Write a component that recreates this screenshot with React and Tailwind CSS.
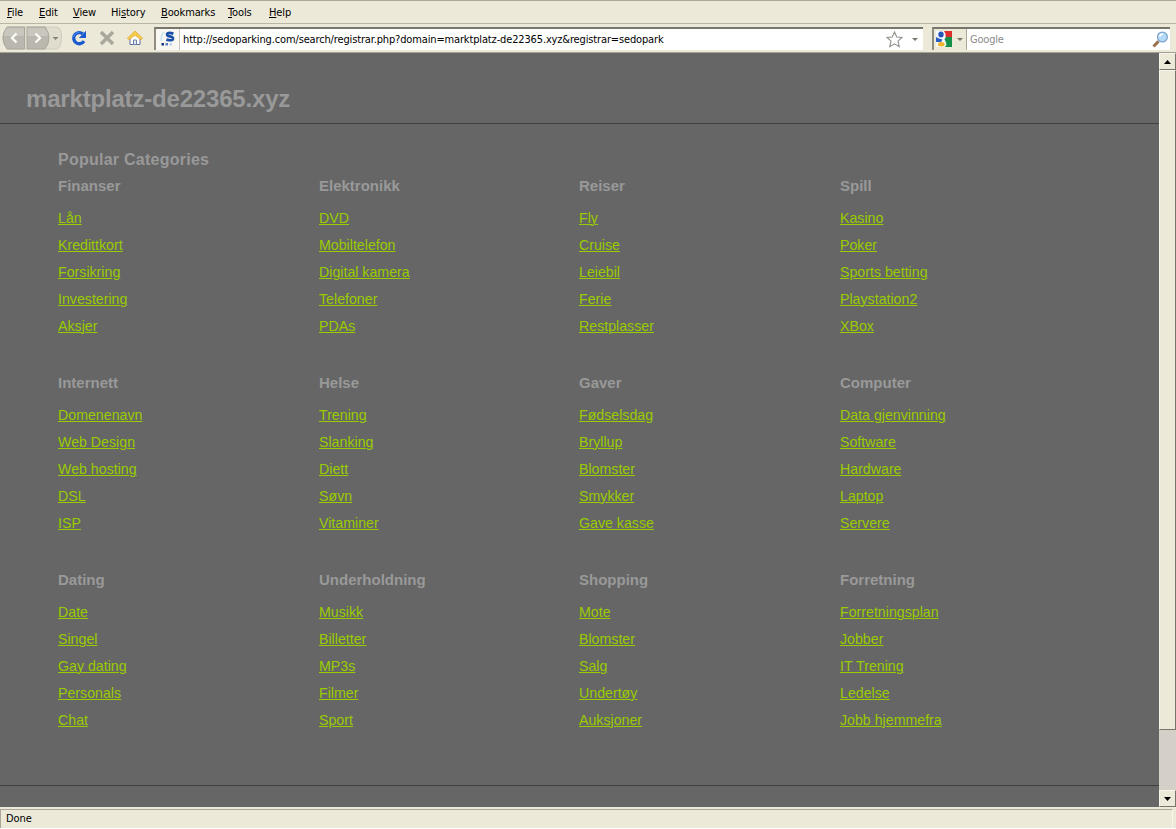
import clsx from 'clsx';

const menuItems = [
  { label: 'File', before: '', key: 'F', after: 'ile', width: 'w-[32px]' },
  { label: 'Edit', before: '', key: 'E', after: 'dit', width: 'w-[34px]' },
  { label: 'View', before: '', key: 'V', after: 'iew', width: 'w-[38px]' },
  { label: 'History', before: 'Hi', key: 's', after: 'tory', width: 'w-[50px]' },
  { label: 'Bookmarks', before: '', key: 'B', after: 'ookmarks', width: 'w-[67px]' },
  { label: 'Tools', before: '', key: 'T', after: 'ools', width: 'w-[41px]' },
  { label: 'Help', before: '', key: 'H', after: 'elp', width: 'w-[40px]' },
];

const categories = [
  { title: 'Finanser', links: ['Lån', 'Kredittkort', 'Forsikring', 'Investering', 'Aksjer'] },
  { title: 'Elektronikk', links: ['DVD', 'Mobiltelefon', 'Digital kamera', 'Telefoner', 'PDAs'] },
  { title: 'Reiser', links: ['Fly', 'Cruise', 'Leiebil', 'Ferie', 'Restplasser'] },
  { title: 'Spill', links: ['Kasino', 'Poker', 'Sports betting', 'Playstation2', 'XBox'] },
  { title: 'Internett', links: ['Domenenavn', 'Web Design', 'Web hosting', 'DSL', 'ISP'] },
  { title: 'Helse', links: ['Trening', 'Slanking', 'Diett', 'Søvn', 'Vitaminer'] },
  { title: 'Gaver', links: ['Fødselsdag', 'Bryllup', 'Blomster', 'Smykker', 'Gave kasse'] },
  { title: 'Computer', links: ['Data gjenvinning', 'Software', 'Hardware', 'Laptop', 'Servere'] },
  { title: 'Dating', links: ['Date', 'Singel', 'Gay dating', 'Personals', 'Chat'] },
  { title: 'Underholdning', links: ['Musikk', 'Billetter', 'MP3s', 'Filmer', 'Sport'] },
  { title: 'Shopping', links: ['Mote', 'Blomster', 'Salg', 'Undertøy', 'Auksjoner'] },
  { title: 'Forretning', links: ['Forretningsplan', 'Jobber', 'IT Trening', 'Ledelse', 'Jobb hjemmefra'] },
];

const NavButtons = () => (
  <svg width="60" height="24" viewBox="0 0 60 24" className="shrink-0">
    <path d="M7 1H55Q60 2 59.5 12T55 23H7Q1 19 1 12T7 1Z" fill="#e0ddce" stroke="#cfccbe" />
    <path d="M5 1H22.5V23H5Q1 18 1 12T5 1Z" fill="#bab8ae" stroke="#aaa89d" />
    <path d="M25 1H43Q47 6 47 12T43 23H25Z" fill="#bab8ae" stroke="#aaa89d" />
    <path d="M5.5 2H22V10H2Q2.5 4 5.5 2ZM25.5 2H42.5Q45.5 5 46 10H25.5Z" fill="#c9c7bd" />
    <path d="M14.5 7.5L10 12L14.5 16.5M33.5 7.5L38 12L33.5 16.5" fill="none" stroke="#fbfaf5" strokeWidth="2.4" />
    <path d="M50.5 11H56.5L53.5 14Z" fill="#85837a" />
  </svg>
);

const ReloadIcon = () => (
  <svg width="16" height="16" viewBox="0 0 16 16" className="shrink-0">
    <path d="M13 11.2A5.6 5.6 0 1 1 11.8 3.8" fill="none" stroke="#1c5ad0" strokeWidth="3.3" />
    <path d="M15 0.8V8H7.8Z" fill="#1c5ad0" />
    <path d="M2.5 7Q4 2.5 8.5 2.2" fill="none" stroke="#4f91ee" strokeWidth="1" />
  </svg>
);

const StopIcon = () => (
  <svg width="16" height="16" viewBox="0 0 16 16" className="shrink-0">
    <path d="M2 2L14 14M14 2L2 14" stroke="#aaa89c" strokeWidth="3.6" />
  </svg>
);

const HomeIcon = () => (
  <svg width="16" height="16" viewBox="0 0 16 16" className="shrink-0">
    <path d="M3 7V14.5H13V7L8 3Z" fill="#fffef8" stroke="#5e6f9e" />
    <path d="M6.5 14.5V10H9.5V14.5Z" fill="#dfe8f6" stroke="#6f7ea6" />
    <path d="M8 1L15.6 8.2L14 9.8L8 5.2L2 9.8L0.4 8.2Z" fill="#f6cb4a" stroke="#dba62c" strokeWidth="0.7" />
  </svg>
);

const SedoIcon = () => (
  <svg width="16" height="16" viewBox="0 0 16 16" className="shrink-0">
    <path d="M4 1Q0.5 4 1.5 10" fill="none" stroke="#c7e5f3" strokeWidth="1.6" />
    <path d="M13.4 2.6Q7 0.9 7.1 3.6Q7.2 5 10 5.4Q13.3 5.8 13 7.8Q12.4 10.2 6.4 8.6" fill="none" stroke="#1a4fa8" strokeWidth="2.7" />
    <path d="M1.5 12H4V14.5H1.5Z" fill="#17377e" />
    <path d="M5.5 12H8V14.5H5.5Z" fill="#5c80c2" />
    <path d="M9.5 12H12V14.5H9.5Z" fill="#b9d2ec" />
  </svg>
);

const StarIcon = () => (
  <svg width="17" height="17" viewBox="0 0 17 17" className="shrink-0">
    <path d="M8.5 1L10.7 6L16 6.5L12 10.2L13.2 15.6L8.5 12.8L3.8 15.6L5 10.2L1 6.5L6.3 6Z" fill="#fff" stroke="#8f8f8a" strokeWidth="1.1" />
  </svg>
);

const GoogleIcon = () => (
  <svg width="16" height="16" viewBox="0 0 16 16" className="shrink-0">
    <path d="M0 0H16V16H0Z" fill="#f6f8ff" />
    <path d="M8 0H16V6H9.5Q10.5 3 8 0Z" fill="#dc2f2c" />
    <path d="M10 6H16V16H9Q11.5 13.5 9.5 10.5L8.5 8Z" fill="#14904a" />
    <path d="M0 6Q4 8 6.5 8.5L5 11H0Z" fill="#2a5dc2" />
    <ellipse cx="5" cy="3.6" rx="2.7" ry="3" fill="#2456b9" />
    <ellipse cx="5.3" cy="13.3" rx="3.4" ry="2.2" fill="#f2b52d" />
  </svg>
);

const SearchIcon = () => (
  <svg width="17" height="17" viewBox="0 0 17 17" className="shrink-0">
    <path d="M1.5 15.5L6.5 10.3" stroke="#98704c" strokeWidth="3" />
    <circle cx="10.4" cy="6" r="4.9" fill="#b4dcf8" stroke="#7fa3cc" strokeWidth="1.3" />
    <path d="M7.5 5.8Q8.2 3 11 3" fill="none" stroke="#fff" strokeWidth="1.5" />
  </svg>
);

const Caret = ({ className, up }) => (
  <svg width="7" height="4" viewBox="0 0 7 4" className={clsx('shrink-0', className)}>
    <path d={up ? 'M0 4H7L3.5 0Z' : 'M0 0H7L3.5 4Z'} fill="currentColor" />
  </svg>
);

const SmallCaret = ({ className }) => (
  <svg width="6" height="3" viewBox="0 0 6 3" className={clsx('shrink-0 text-[#77756c]', className)}>
    <path d="M0 0H6L3 3Z" fill="currentColor" />
  </svg>
);

const ScrollButton = ({ up }) => (
  <div className="flex h-[17px] w-[17px] shrink-0 items-center justify-center border border-t-[#f7f5ec] border-r-[#77756c] border-b-[#77756c] border-l-[#f7f5ec] bg-[#ece9d8]">
    <Caret up={up} className="text-black" />
  </div>
);

const MenuBar = () => (
  <div className="flex h-[23px] shrink-0 items-center border-t border-[#aca899] pt-px pl-[7px] tracking-[-0.12px]">
    {menuItems.map((item) => (
      <span key={item.label} className={clsx('shrink-0 whitespace-nowrap', item.width)}>
        {item.before}
        <span className="underline underline-offset-1">{item.key}</span>
        {item.after}
      </span>
    ))}
  </div>
);

const Toolbar = () => (
  <div className="flex h-[30px] shrink-0 items-center border-t border-b border-t-[#b9b6a6] border-b-[#a3a194] pl-[2px]">
    <NavButtons />
    <div className="ml-[9px] flex items-center gap-3">
      <ReloadIcon />
      <StopIcon />
      <HomeIcon />
    </div>

    {/* Address bar */}
    <div className="ml-[11px] flex h-[23px] w-[769px] shrink-0 items-center border-t-2 border-l-2 border-t-[#77756c] border-l-[#8f8d82] bg-white">
      <div className="flex h-full w-[24px] shrink-0 items-center justify-center border-r border-[#c9c7ba] bg-[#f8f7f2]">
        <SedoIcon />
      </div>
      <span className="ml-[3px] w-[703px] pt-px whitespace-nowrap tracking-[-0.145px]">
        http://sedoparking.com/search/registrar.php?domain=marktplatz-de22365.xyz&amp;registrar=sedopark
      </span>
      <StarIcon />
      <SmallCaret className="ml-[9px]" />
    </div>

    {/* Search box */}
    <div className="ml-[9px] flex h-[23px] w-[238px] shrink-0 items-center border-t-2 border-l-2 border-t-[#77756c] border-l-[#8f8d82] bg-white">
      <div className="flex h-full w-[33px] shrink-0 items-center border-r border-[#aca899] bg-[#ece9d8] pl-[2px]">
        <GoogleIcon />
        <SmallCaret className="ml-[5px]" />
      </div>
      <span className="ml-[3px] flex-1 pt-px tracking-[-0.2px] text-[#8b8b8b]">Google</span>
      <SearchIcon />
      <span className="w-px" />
    </div>
  </div>
);

const Category = ({ title, links }) => (
  <div className="h-[197px]">
    <h3 className="mb-[14px] text-[15px] leading-[18px] font-bold text-[#999]">{title}</h3>
    <ul>
      {links.map((link) => (
        <li key={link} className="h-[27px] text-[14.2px] leading-[18px] whitespace-nowrap">
          <a href="#" className="text-[#9c0] underline decoration-1 underline-offset-1">
            {link}
          </a>
        </li>
      ))}
    </ul>
  </div>
);

const ParkingPage = () => (
  <main className="flex min-w-0 flex-1 flex-col bg-[#666] font-['Liberation_Sans',Arial,sans-serif]">
    <header className="h-[71px] shrink-0 border-b border-[#404040] pt-[32px] pl-[26px]">
      <h1 className="text-[24px] leading-[28px] font-bold tracking-[-0.18px] text-[#999]">marktplatz-de22365.xyz</h1>
    </header>
    <section className="h-[662px] shrink-0 border-b border-[#404040] pt-[26px] pl-[58px]">
      <h2 className="mb-[8px] text-[16px] leading-[19px] font-bold tracking-[0.25px] text-[#999]">Popular Categories</h2>
      <div className="grid grid-cols-[261px_260px_261px_261px]">
        {categories.map((category) => (
          <Category key={category.title} title={category.title} links={category.links} />
        ))}
      </div>
    </section>
  </main>
);

const App = () => (
  <div className="flex h-[829px] w-[1176px] flex-col overflow-hidden bg-[#ece9d8] font-['DejaVu_Sans_Condensed','DejaVu_Sans',sans-serif] text-[11px] leading-[14px] text-black">
    <MenuBar />
    <Toolbar />

    <div className="flex h-[754px] shrink-0">
      <ParkingPage />
      <div className="flex w-[17px] shrink-0 flex-col bg-[#d4d0c8]">
        <ScrollButton up />
        <div className="h-[660px] border border-t-[#f7f5ec] border-r-[#77756c] border-b-[#77756c] border-l-[#f7f5ec] bg-[#ece9d8]" />
        <div className="flex-1" />
        <ScrollButton />
      </div>
    </div>

    {/* Status bar */}
    <div className="flex flex-1 border-b border-white pt-[2px]">
      <div className="mr-[3px] flex flex-1 items-center border-t border-r border-l border-[#aca899] border-r-[#f7f5ec] pl-[5px] tracking-[-0.1px]">
        Done
      </div>
    </div>
  </div>
);

export default App;
